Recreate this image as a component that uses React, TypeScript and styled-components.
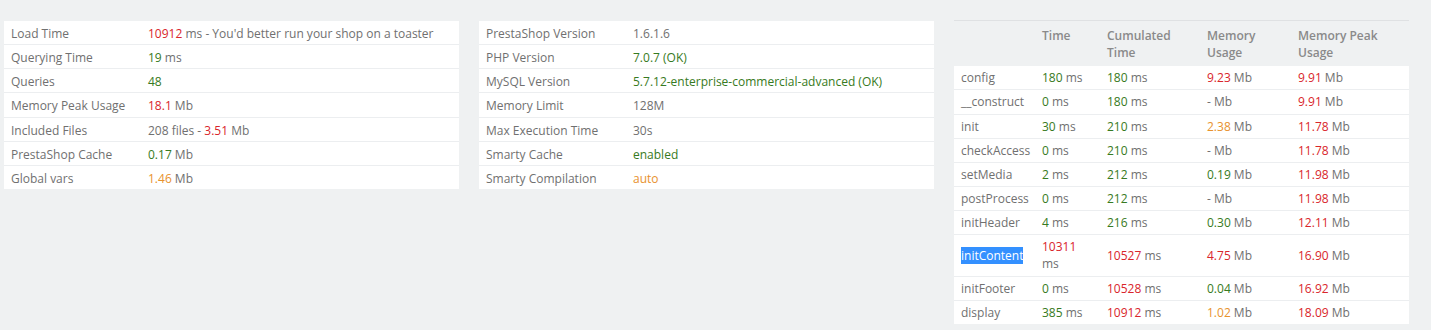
import styled, { createGlobalStyle } from 'styled-components';

type Tone = 'red' | 'green' | 'orange' | 'muted';

type Part = { text: string, tone?: Tone };

type SummaryRow = { label: string, value: Part[] };

type ProfileRow = {
    name: string,
    time: Part,
    cumulated: Part,
    memory: Part,
    peak: Part,
    selected?: boolean,
};

const tones: Record<Tone, string> = {
    red: '#d9252b',
    green: '#377a22',
    orange: '#e8922e',
    muted: '#707070',
};

const GlobalStyle = createGlobalStyle`
    body {
        margin: 0;
        background: #eff1f2;
        font-family: "Open Sans", "Liberation Sans", sans-serif;
        font-size: 12px;
        line-height: 1.42857;
        color: #707070;
    }
`;

const Page = styled.div`
    display: grid;
    grid-template-columns: repeat(3, 455px);
    column-gap: 20px;
    align-items: start;
    padding: 20px 4px;
`;

const Table = styled.table`
    width: 100%;
    border-collapse: collapse;
    table-layout: fixed;
    border-top: 1px solid transparent;
`;

const ProfileGrid = styled(Table)`
    border-top: 1px solid #dfe1e3;
`;

const Row = styled.tr`
    background: #fff;
    border-bottom: 1px solid #eceef0;

    &:last-child {
        border-bottom: none;
    }
`;

const Cell = styled.td<{ $shift?: boolean }>`
    padding: ${props => props.$shift ? '4px 7px 2px' : '3px 7px'};
    vertical-align: middle;
    color: ${tones.muted};
    white-space: normal;
`;

const TimeCell = styled(Cell)`
    padding-right: 9px;
`;

const HeadCell = styled.th`
    padding: 6px 7px 5px;
    text-align: left;
    vertical-align: top;
    font-weight: 600;
    color: #8a8a8a;
`;

const Num = styled.span<{ $tone?: Tone }>`
    color: ${props => tones[props.$tone || 'muted']};
`;

const Selected = styled.span`
    background: #3390ff;
    color: #fff;
`;

const Value = ({ parts }: { parts: Part[] }) => (
    <>
        {parts.map((p, i) => <Num key={i} $tone={p.tone}>{p.text}</Num>)}
    </>
);

const ms = (n: string, tone: Tone): Part[] => [{ text: n, tone }, { text: ' ms' }];

const loadRows: SummaryRow[] = [
    { label: 'Load Time', value: [{ text: '10912', tone: 'red' }, { text: " ms - You'd better run your shop on a toaster" }] },
    { label: 'Querying Time', value: ms('19', 'green') },
    { label: 'Queries', value: [{ text: '48', tone: 'green' }] },
    { label: 'Memory Peak Usage', value: [{ text: '18.1', tone: 'red' }, { text: ' Mb' }] },
    { label: 'Included Files', value: [{ text: '208 files - ' }, { text: '3.51', tone: 'red' }, { text: ' Mb' }] },
    { label: 'PrestaShop Cache', value: [{ text: '0.17', tone: 'green' }, { text: ' Mb' }] },
    { label: 'Global vars', value: [{ text: '1.46', tone: 'orange' }, { text: ' Mb' }] },
];

const configRows: SummaryRow[] = [
    { label: 'PrestaShop Version', value: [{ text: '1.6.1.6' }] },
    { label: 'PHP Version', value: [{ text: '7.0.7 (OK)', tone: 'green' }] },
    { label: 'MySQL Version', value: [{ text: '5.7.12-enterprise-commercial-advanced (OK)', tone: 'green' }] },
    { label: 'Memory Limit', value: [{ text: '128M' }] },
    { label: 'Max Execution Time', value: [{ text: '30s' }] },
    { label: 'Smarty Cache', value: [{ text: 'enabled', tone: 'green' }] },
    { label: 'Smarty Compilation', value: [{ text: 'auto', tone: 'orange' }] },
];

const p = (text: string, tone?: Tone): Part => ({ text, tone });

const profileRows: ProfileRow[] = [
    { name: 'config', time: p('180', 'green'), cumulated: p('180', 'green'), memory: p('9.23', 'red'), peak: p('9.91', 'red') },
    { name: '__construct', time: p('0', 'green'), cumulated: p('180', 'green'), memory: p('-'), peak: p('9.91', 'red') },
    { name: 'init', time: p('30', 'green'), cumulated: p('210', 'green'), memory: p('2.38', 'orange'), peak: p('11.78', 'red') },
    { name: 'checkAccess', time: p('0', 'green'), cumulated: p('210', 'green'), memory: p('-'), peak: p('11.78', 'red') },
    { name: 'setMedia', time: p('2', 'green'), cumulated: p('212', 'green'), memory: p('0.19', 'green'), peak: p('11.98', 'red') },
    { name: 'postProcess', time: p('0', 'green'), cumulated: p('212', 'green'), memory: p('-'), peak: p('11.98', 'red') },
    { name: 'initHeader', time: p('4', 'green'), cumulated: p('216', 'green'), memory: p('0.30', 'green'), peak: p('12.11', 'red') },
    { name: 'initContent', time: p('10311', 'red'), cumulated: p('10527', 'red'), memory: p('4.75', 'red'), peak: p('16.90', 'red'), selected: true },
    { name: 'initFooter', time: p('0', 'green'), cumulated: p('10528', 'red'), memory: p('0.04', 'green'), peak: p('16.92', 'red') },
    { name: 'display', time: p('385', 'green'), cumulated: p('10912', 'red'), memory: p('1.02', 'orange'), peak: p('18.09', 'red') },
];

const Summary = ({ rows, labelWidth }: { rows: SummaryRow[], labelWidth: number }) => (
    <Table>
        <colgroup>
            <col style={{ width: labelWidth }} />
            <col />
        </colgroup>
        <tbody>
            {rows.map(r => (
                <Row key={r.label}>
                    <Cell $shift>{r.label}</Cell>
                    <Cell $shift><Value parts={r.value} /></Cell>
                </Row>
            ))}
        </tbody>
    </Table>
);

const App = () => (
    <>
        <GlobalStyle />
        <Page>
            <Summary rows={loadRows} labelWidth={137} />
            <Summary rows={configRows} labelWidth={147} />
            <ProfileGrid>
                <colgroup>
                    <col style={{ width: 81 }} />
                    <col style={{ width: 65 }} />
                    <col style={{ width: 100 }} />
                    <col style={{ width: 91 }} />
                    <col />
                </colgroup>
                <thead>
                    <tr>
                        <HeadCell></HeadCell>
                        <HeadCell>Time</HeadCell>
                        <HeadCell>Cumulated Time</HeadCell>
                        <HeadCell>Memory Usage</HeadCell>
                        <HeadCell>Memory Peak Usage</HeadCell>
                    </tr>
                </thead>
                <tbody>
                    {profileRows.map(r => (
                        <Row key={r.name}>
                            <Cell>{r.selected ? <Selected>{r.name}</Selected> : r.name}</Cell>
                            <TimeCell><Value parts={[r.time, p(' ms')]} /></TimeCell>
                            <Cell><Value parts={[r.cumulated, p(' ms')]} /></Cell>
                            <Cell><Value parts={[r.memory, p(' Mb')]} /></Cell>
                            <Cell><Value parts={[r.peak, p(' Mb')]} /></Cell>
                        </Row>
                    ))}
                </tbody>
            </ProfileGrid>
        </Page>
    </>
);

export default App;
